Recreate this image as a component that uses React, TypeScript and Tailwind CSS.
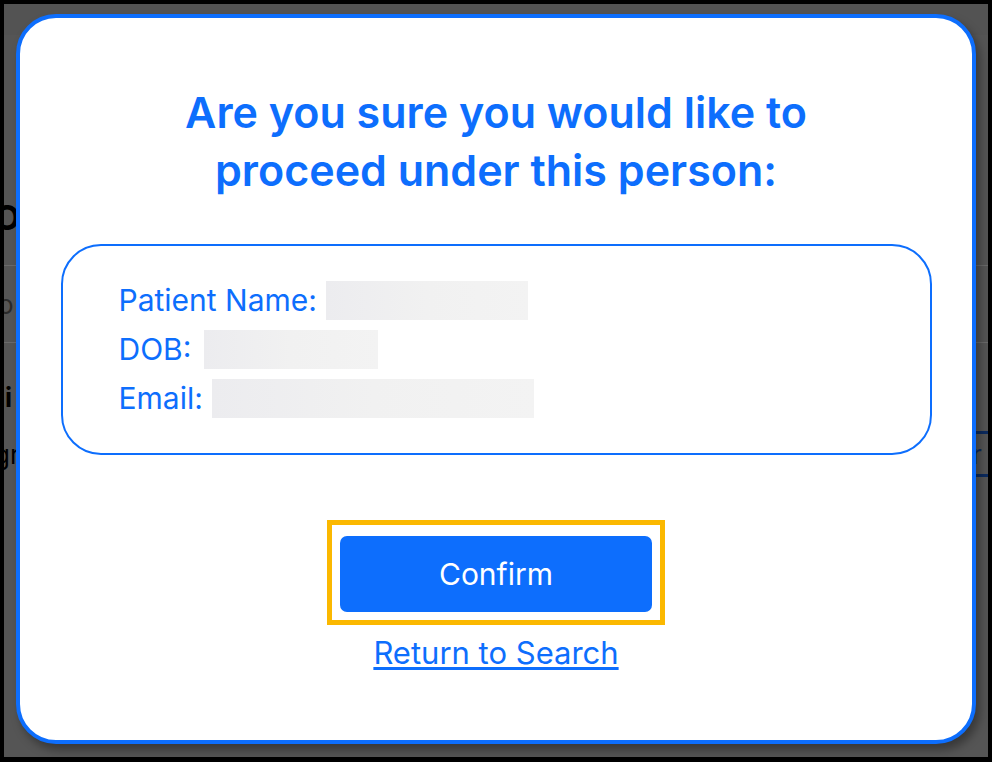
import React from 'react'

function Redacted({ w }: { w: string }) {
  return <span className={`inline-block h-[39px] align-middle bg-gradient-to-r from-[#ececef] via-[#f1f1f1] to-[#f3f3f3] ${w}`} />
}

function BackdropPage() {
  // the page behind the modal, dimmed; only slivers show at the edges
  return (
    <div className="absolute inset-0 flex flex-col text-[#111]">
      <div className="h-[31px] bg-[#535353]" />
      <div className="h-[134px]" />
      <div className="flex h-[96px] items-center">
        <span className="-ml-[10px] text-[34px] font-bold text-black">O</span>
      </div>
      <div className="h-px bg-[#6a6a6a]" />
      <div className="flex h-[76px] items-center">
        <span className="-ml-[6px] text-[26px] text-[#2a2a2a]">o</span>
      </div>
      <div className="h-px bg-[#6a6a6a]" />
      <div className="flex h-[108px] items-center">
        <span className="-ml-[14px] text-[26px] font-bold text-black">ai</span>
      </div>
      <div className="-mt-[20px] flex h-[46px] items-center justify-between">
        <span className="-ml-[10px] text-[26px] text-black">gr</span>
        <span className="mr-[-12px] flex h-full w-[30px] items-center border-y-[3px] border-[#0b2a5e] pl-[2px] text-[26px] text-[#0b2a5e]">r</span>
      </div>
    </div>
  )
}

export default function App() {
  return (
    <div className="relative h-[762px] w-[992px] overflow-hidden border-t-4 border-r-4 border-b-[5px] border-l-4 border-black bg-[#555555] font-['Inter','Liberation_Sans',sans-serif]">
      <BackdropPage />
      <div className="absolute inset-0 pt-[10px] pl-[12px]">
        <div className="flex h-[730px] w-[960px] flex-col items-center rounded-[40px] border-4 border-[#0d6efd] bg-white shadow-[4px_6px_10px_rgba(0,0,0,0.35)]">
          <h1 className="mt-[65px] text-center text-[43px] leading-[58px] font-semibold text-[#0d6efd]">
            Are you sure you would like to
            <br />
            proceed under this person:
          </h1>

          <div className="mt-[45px] flex h-[211px] w-[871px] flex-col justify-center rounded-[40px] border-2 border-[#0d6efd] pl-[56px] text-[30px] leading-[49px] text-[#0d6efd]">
            <div className="flex items-center gap-[9px]">
              <span>Patient Name:</span>
              <Redacted w="w-[202px]" />
            </div>
            <div className="flex items-center gap-[13px]">
              <span>DOB:</span>
              <Redacted w="w-[174px]" />
            </div>
            <div className="flex items-center gap-[9px]">
              <span>Email:</span>
              <Redacted w="w-[322px]" />
            </div>
          </div>

          <div className="mt-[65px] border-[5px] border-[#fbb800] px-[8px] pt-[11px] pb-[8px]">
            <button className="h-[76px] w-[312px] rounded-[7px] bg-[#0d6efd] text-[30px] text-white">
              Confirm
            </button>
          </div>

          <a href="#" className="mt-[6px] text-[31px] leading-[44px] text-[#0d6efd] underline underline-offset-[3px]">
            Return to Search
          </a>
        </div>
      </div>
    </div>
  )
}
